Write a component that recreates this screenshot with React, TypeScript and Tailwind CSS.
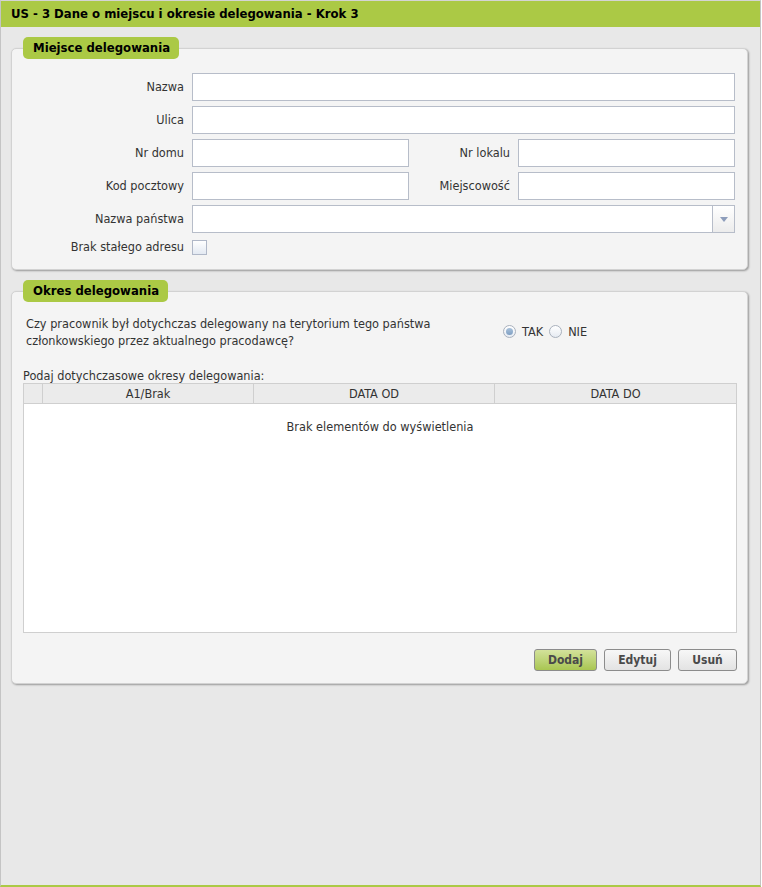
import React from "react";

const font = "font-['DejaVu_Sans_Condensed','DejaVu_Sans',sans-serif]";

function Input({ className = "" }: { className?: string }) {
  return <div className={`h-[28px] border border-[#b7bdc9] bg-white ${className}`} />;
}

function Label({ children }: { children: React.ReactNode }) {
  return <div className="flex items-center justify-end text-[12.6px] text-[#333]">{children}</div>;
}

function Legend({ children, w }: { children: React.ReactNode; w: string }) {
  return (
    <div className={`relative z-10 ml-[12px] -mb-[11px] h-[22px] ${w} rounded-[5px] bg-[#abc945] pl-[10px] flex items-center text-[13px] font-bold text-black`}>
      {children}
    </div>
  );
}

function Button({ children, primary }: { children: React.ReactNode; primary?: boolean }) {
  return (
    <div
      className={`h-[22px] flex items-center justify-center rounded-[3px] border border-[#8c8c8c] text-[12px] font-bold text-[#4a4a4a] ${
        primary ? "bg-gradient-to-b from-[#d3e29a] to-[#a9c651]" : "bg-gradient-to-b from-[#f7f7f7] to-[#e3e3e3]"
      }`}
    >
      {children}
    </div>
  );
}

function Radio({ checked }: { checked?: boolean }) {
  return (
    <div className="w-[13px] h-[13px] rounded-full border border-[#a9b1bd] bg-gradient-to-b from-white to-[#e6ebf2] flex items-center justify-center">
      {checked && <div className="w-[7px] h-[7px] rounded-full bg-gradient-to-b from-[#a9c1da] to-[#7f9fc2]" />}
    </div>
  );
}

export default function App() {
  return (
    <div className={`w-[761px] h-[887px] bg-[#e8e8e8] border-x border-[#c4c4c4] border-t border-t-[#d4d4d4] border-b-2 border-b-[#abc945] flex flex-col ${font}`}>
      <div className="h-[26px] shrink-0 bg-[#abc945] pl-[10px] flex items-center text-[13px] font-bold text-black">
        US - 3 Dane o miejscu i okresie delegowania - Krok 3
      </div>

      <div className="pl-[10px] pr-[12px] pt-[10px] flex flex-col">
        {/* Fieldset 1 */}
        <Legend w="w-[156px]">Miejsce delegowania</Legend>
        <div className="h-[222px] rounded-[5px] border border-[#d2d2d2] bg-[#f4f4f4] shadow-[1px_1px_2px_rgba(0,0,0,0.35)] pt-[24px] pr-[12px]">
          <div className="grid grid-cols-[172px_217px_1fr_217px] gap-x-[8px] gap-y-[5px]">
            <Label>Nazwa</Label>
            <Input className="col-span-3" />
            <Label>Ulica</Label>
            <Input className="col-span-3" />
            <Label>Nr domu</Label>
            <Input />
            <Label>Nr lokalu</Label>
            <Input />
            <Label>Kod pocztowy</Label>
            <Input />
            <Label>Miejscowość</Label>
            <Input />
            <Label>Nazwa państwa</Label>
            <div className="col-span-3 h-[28px] border border-[#b7bdc9] bg-white flex justify-end">
              <div className="w-[22px] h-full border-l border-[#b7bdc9] bg-gradient-to-b from-white to-[#ececec] flex items-center justify-center">
                <svg width="8" height="5" viewBox="0 0 8 5">
                  <path d="M0 0h8L4 5z" fill="#8d9dbb" />
                </svg>
              </div>
            </div>
            <div className="flex items-center justify-end text-[12.6px] text-[#333]">Brak stałego adresu</div>
            <div className="col-span-3 flex items-center">
              <div className="w-[15px] h-[15px] border border-[#b0b8c8] bg-gradient-to-b from-white to-[#e3e9f2]" />
            </div>
          </div>
        </div>

        {/* Fieldset 2 */}
        <div className="h-[10px]" />
        <Legend w="w-[145px]">Okres delegowania</Legend>
        <div className="h-[393px] rounded-[5px] border border-[#d2d2d2] bg-[#f4f4f4] shadow-[1px_1px_2px_rgba(0,0,0,0.35)] pt-[23px] pl-[11px] pr-[10px] flex flex-col">
          <div className="flex items-center">
            <div className="w-[480px] pl-[3px]">
              <div className="w-[430px] text-[12.6px] leading-[17px] text-[#333]">
                Czy pracownik był dotychczas delegowany na terytorium tego państwa członkowskiego przez aktualnego pracodawcę?
              </div>
            </div>
            <div className="flex items-center text-[12.6px] text-[#333]">
              <Radio checked />
              <span className="ml-[6px] mr-[6px]">TAK</span>
              <Radio />
              <span className="ml-[6px]">NIE</span>
            </div>
          </div>
          <div className="mt-[19px] text-[12.6px] leading-[15px] text-[#333]">Podaj dotychczasowe okresy delegowania:</div>
          <div className="h-[250px] border border-[#cfcfcf] bg-white flex flex-col">
            <div className="h-[20px] shrink-0 bg-[#ebebeb] border-b border-[#cfcfcf] grid grid-cols-[19px_211px_241px_1fr] text-[12.6px] text-[#333]">
              <div className="border-r border-[#cfcfcf]" />
              <div className="border-r border-[#cfcfcf] flex items-center justify-center pt-px">A1/Brak</div>
              <div className="border-r border-[#cfcfcf] flex items-center justify-center pt-px">DATA OD</div>
              <div className="flex items-center justify-center pt-px">DATA DO</div>
            </div>
            <div className="pt-[14px] text-center text-[12.6px] text-[#333]">Brak elementów do wyświetlenia</div>
          </div>
          <div className="mt-[16px] flex justify-end gap-[7px]">
            <div className="w-[63px]"><Button primary>Dodaj</Button></div>
            <div className="w-[67px]"><Button>Edytuj</Button></div>
            <div className="w-[59px]"><Button>Usuń</Button></div>
          </div>
        </div>
      </div>
    </div>
  );
}
